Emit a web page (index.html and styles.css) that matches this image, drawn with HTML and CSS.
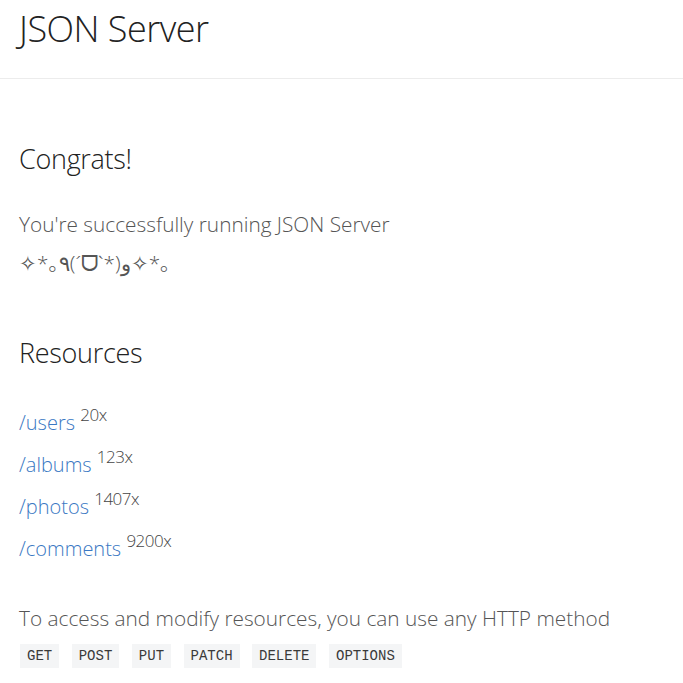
FILE: index.html
```html
<!DOCTYPE html>
<html lang="en">
<head>
<meta charset="utf-8">
<title>JSON Server</title>
<link rel="stylesheet" href="styles.css">
</head>
<body>
<header class="topbar">
  <h1 class="brand">JSON Server</h1>
</header>
<main class="content">
  <section class="intro">
    <h2 class="section-title">Congrats!</h2>
    <p class="lead lead-tall">You're successfully running JSON Server<br>✧*｡٩(ˊᗜˋ*)و✧*｡</p>
  </section>
  <section class="resources">
    <h2 class="section-title">Resources</h2>
    <ul class="resource-list">
      <li><a href="#" class="resource">/users</a> <sup class="count">20x</sup></li>
      <li><a href="#" class="resource">/albums</a> <sup class="count">123x</sup></li>
      <li><a href="#" class="resource">/photos</a> <sup class="count">1407x</sup></li>
      <li><a href="#" class="resource">/comments</a> <sup class="count">9200x</sup></li>
    </ul>
  </section>
  <section class="methods">
    <p class="lead">To access and modify resources, you can use any HTTP method</p>
    <div class="method-list">
      <code class="method">GET</code>
      <code class="method">POST</code>
      <code class="method">PUT</code>
      <code class="method">PATCH</code>
      <code class="method">DELETE</code>
      <code class="method">OPTIONS</code>
    </div>
  </section>
</main>
</body>
</html>
```
FILE: styles.css
```css
html, body {
  margin: 0;
  padding: 0;
  background: #fff;
}
body {
  font-family: "Open Sans", "Noto Sans", "Noto Sans CJK JP", sans-serif;
  font-weight: 300;
  color: #333;
}
.topbar {
  height: 79px;
  border-bottom: 1px solid #ececec;
  padding: 0 19px;
  box-sizing: border-box;
  display: flex;
  align-items: flex-start;
}
.brand {
  margin: 0;
  padding-top: 3px;
  font-size: 36px;
  font-weight: 300;
  line-height: 52px;
  color: #222;
  letter-spacing: -0.5px;
}
.content {
  padding: 0 19px;
}
.section-title {
  margin: 0;
  font-size: 27px;
  font-weight: 300;
  line-height: 40px;
  color: #222;
  letter-spacing: -0.3px;
}
.intro {
  padding-top: 60px;
}
.lead {
  margin: 0;
  font-size: 20.8px;
  line-height: 32px;
  color: #555;
}
.lead-tall {
  line-height: 39px;
}
.intro .lead {
  margin-top: 26px;
}
.resources {
  padding-top: 50px;
}
.resource-list {
  list-style: none;
  margin: 29px 0 0;
  padding: 0;
}
.resource-list li {
  font-size: 20px;
  line-height: 42px;
}
.resource {
  color: #3a78c3;
  text-decoration: none;
}
.count {
  font-size: 17px;
  color: #444;
  vertical-align: 9px;
  line-height: 0;
  letter-spacing: -0.5px;
}
.methods {
  padding-top: 32px;
}
.method-list {
  display: flex;
  gap: 12.5px;
  margin-top: 10px;
  padding-left: 1px;
}
.method {
  font-family: "Liberation Mono", "DejaVu Sans Mono", monospace;
  font-size: 14px;
  background: #f4f5f6;
  color: #3a3a3a;
  padding: 4px 7px;
  line-height: 16px;
}
```
